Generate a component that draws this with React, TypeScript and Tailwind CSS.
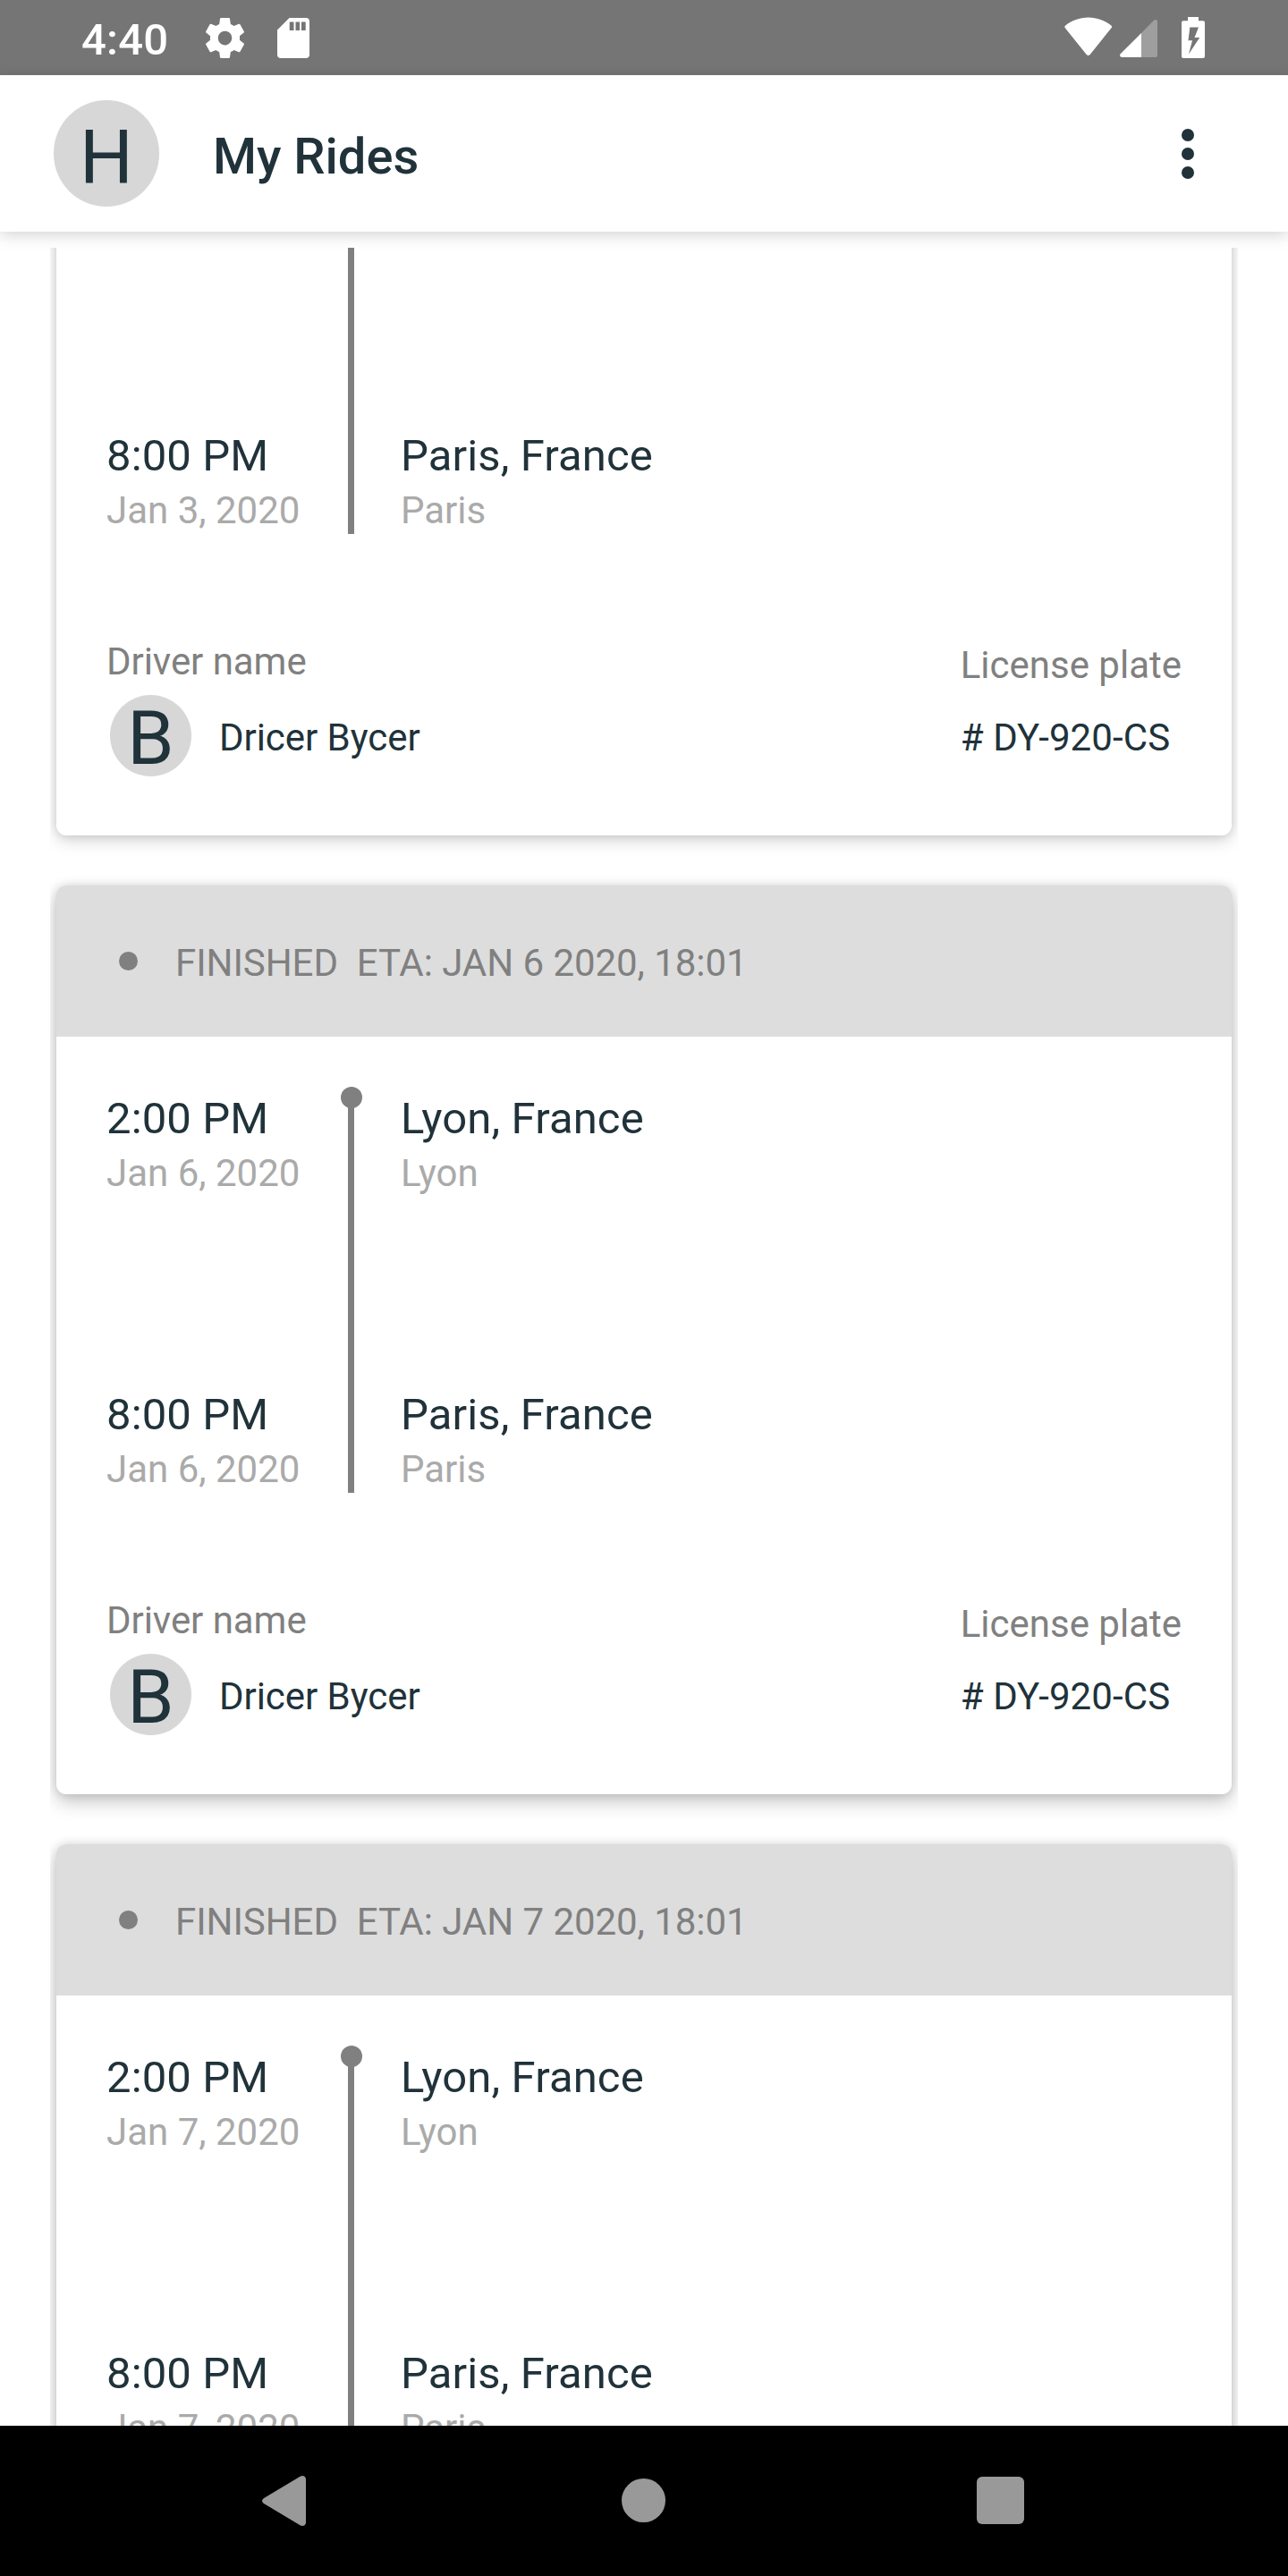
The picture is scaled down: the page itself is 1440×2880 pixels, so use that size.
type Ride = { day: string; eta: string; shadow: string };

const rides: Ride[] = [
  { day: 'Jan 3, 2020', eta: 'JAN 3 2020, 18:01', shadow: 'shadow-[0_7px_18px_rgba(0,0,0,0.14),0_0_11px_rgba(0,0,0,0.14)]' },
  { day: 'Jan 6, 2020', eta: 'JAN 6 2020, 18:01', shadow: 'shadow-[0_9px_20px_rgba(0,0,0,0.22),0_0_11px_rgba(0,0,0,0.13)]' },
  { day: 'Jan 7, 2020', eta: 'JAN 7 2020, 18:01', shadow: 'shadow-[0_9px_20px_rgba(0,0,0,0.22),0_0_11px_rgba(0,0,0,0.13)]' },
];

function StatusBar() {
  return (
    <div className="flex h-[84px] shrink-0 items-start bg-[#757575] text-white">
      <span className="ml-[91px] mt-[16px] w-[139px] text-[49px] font-medium leading-[57px] tracking-[0.2px]">4:40</span>
      <svg className="mt-[20px] h-[45px] w-[43px]" viewBox="2.27 2 19.46 20" preserveAspectRatio="none" fill="currentColor">
        <path d="M19.43 12.98c.04-.32.07-.64.07-.98s-.03-.66-.07-.98l2.11-1.65c.19-.15.24-.42.12-.64l-2-3.46c-.12-.22-.39-.3-.61-.22l-2.49 1c-.52-.4-1.08-.73-1.69-.98l-.38-2.65C14.46 2.18 14.25 2 14 2h-4c-.25 0-.46.18-.49.42l-.38 2.65c-.61.25-1.17.59-1.69.98l-2.49-1c-.23-.09-.49 0-.61.22l-2 3.46c-.13.22-.07.49.12.64l2.11 1.65c-.04.32-.07.65-.07.98s.03.66.07.98l-2.11 1.65c-.19.15-.24.42-.12.64l2 3.46c.12.22.39.3.61.22l2.49-1c.52.4 1.08.73 1.69.98l.38 2.65c.03.24.24.42.49.42h4c.25 0 .46-.18.49-.42l.38-2.65c.61-.25 1.17-.59 1.69-.98l2.49 1c.23.09.49 0 .61-.22l2-3.46c.12-.22.07-.49-.12-.64l-2.11-1.65zM12 15.5c-1.93 0-3.5-1.57-3.5-3.5s1.57-3.5 3.5-3.5 3.5 1.57 3.5 3.5-1.57 3.5-3.5 3.5z" />
      </svg>
      <svg className="ml-[37px] mt-[20px] h-[45px] w-[36px]" viewBox="0 0 36 45" fill="currentColor" fillRule="evenodd">
        <path d="M13.5 0H32Q36 0 36 4V41Q36 45 32 45H4Q0 45 0 41V13.5ZM13.700 4.500V14H18.500V4.500ZM20.500 4.500V14H25V4.500ZM27 4.500V14H31.700V4.500Z" />
      </svg>
      <svg className="ml-auto mt-[19px] h-[44px] w-[54px]" viewBox="0 0 54 44" fill="currentColor">
        <path d="M1.200 9.500C8 4 17 .5 26.700 .5S45.500 4 52.300 9.500Q53.800 10.700 52.500 12.300L28.700 42Q26.700 44 24.700 42L.8 12.300Q-.3 10.700 1.200 9.500Z" />
      </svg>
      <svg className="ml-[8px] mt-[22px] h-[42px] w-[42px]" viewBox="0 0 42 42" fill="currentColor">
        <path fillOpacity=".3" d="M24 15L37.800 1Q40 -1 42 1.500V40Q42 42 40 42H24Z" />
        <path d="M24 15V42H2Q-1 41 .7 38.300Z" />
      </svg>
      <svg className="ml-[27px] mr-[93px] mt-[19px] h-[46px] w-[26px]" viewBox="0 0 26 46" fill="currentColor" fillRule="evenodd">
        <path d="M7 0H19V4.300H24Q26 4.300 26 6.300V44Q26 46 24 46H2Q0 46 0 44V6.300Q0 4.300 2 4.300H7ZM9.300 11.500L7.500 26.200H12L8 41.500L20.200 23H14.500L19 11.500Z" />
      </svg>
    </div>
  );
}

function AppBar() {
  return (
    <header className="z-10 flex h-[175px] shrink-0 items-start bg-white shadow-[0_4px_16px_rgba(0,0,0,0.17)]">
      <div className="ml-[60px] mt-[28px] flex h-[119px] w-[118px] justify-center rounded-full bg-[#d7d7d7] text-[84px] leading-[98px]">
        <span className="mt-[15px]">H</span>
      </div>
      <h1 className="ml-[60px] mt-[58px] text-[56px] font-medium leading-[66px]">My Rides</h1>
      <div className="ml-auto mr-[105px] mt-[60px] flex flex-col gap-[7px]">
        <i className="size-[14px] rounded-full bg-[#20323a]" />
        <i className="size-[14px] rounded-full bg-[#20323a]" />
        <i className="size-[14px] rounded-full bg-[#20323a]" />
      </div>
    </header>
  );
}

function Stop({ main, sub }: { main: string; sub: string }) {
  return (
    <div className="flex h-[331px] flex-col gap-[8px] whitespace-nowrap">
      <span className="text-[49px] leading-[57px] tracking-[0.12px]">{main}</span>
      <span className="text-[42px] leading-[49px] text-[#aaaaaa]">{sub}</span>
    </div>
  );
}

function RideCard({ ride }: { ride: Ride }) {
  return (
    <article className={`h-[1016px] shrink-0 overflow-hidden rounded-[11px] bg-white ${ride.shadow}`}>
      <div className="flex h-[169px] items-start bg-[#dddddd] text-[42px] leading-[49px] text-[#808080]">
        <i className="ml-[70px] mt-[74px] size-[21px] rounded-full bg-[#808080]" />
        <span className="ml-[42px] mt-[62px] whitespace-pre tracking-[-0.05px]">{'FINISHED  ETA: ' + ride.eta}</span>
      </div>
      <div className="flex h-[572px] px-[56px] pt-[56px]">
        <div className="w-[261px] pt-[7px]">
          <Stop main="2:00 PM" sub={ride.day} />
          <Stop main="8:00 PM" sub={ride.day} />
        </div>
        <div className="flex w-[25px] flex-col items-center">
          <i className="size-[24px] rounded-full bg-[#808080]" />
          <i className="-mt-[1px] h-[431px] w-[7px] bg-[#808080]" />
        </div>
        <div className="ml-[43px] pt-[7px]">
          <Stop main="Lyon, France" sub="Lyon" />
          <Stop main="Paris, France" sub="Paris" />
        </div>
      </div>
      <div className="flex justify-between px-[56px] pt-[56px] text-[42px] leading-[49px]">
        <div>
          <div className="tracking-[-0.05px] text-[#808080]">Driver name</div>
          <div className="ml-[4px] mt-[13px] flex items-start">
            <div className="flex size-[91px] justify-center rounded-full bg-[#d7d7d7] text-[84px] leading-[98px]">
              <span>B</span>
            </div>
            <span className="ml-[31px] mt-[23px] tracking-[-0.05px]">Dricer Bycer</span>
          </div>
        </div>
        <div className="pt-[4px]">
          <div className="text-[#808080]">License plate</div>
          <div className="mt-[32px] tracking-[0.1px]"># DY-920-CS</div>
        </div>
      </div>
    </article>
  );
}

function NavBar() {
  return (
    <nav className="flex h-[168px] shrink-0 items-center bg-black pb-[1px] text-[#999999]">
      <svg className="ml-[293px] h-[56px] w-[49px]" viewBox="0 0 49 56" fill="currentColor">
        <path d="M42.500 .8C45.500 -1 49 .5 49 4V52C49 55.500 45.500 57 42.500 55.200L2 31Q-2 28 2 25Z" />
      </svg>
      <i className="ml-[353px] size-[49px] rounded-full bg-[#999999]" />
      <i className="ml-[347.500px] size-[53px] rounded-[6px] bg-[#999999]" />
    </nav>
  );
}

export default function App() {
  return (
    <div className="flex h-[2880px] w-[1440px] flex-col overflow-hidden bg-white font-[Roboto,sans-serif] text-[#20323a]">
      <StatusBar />
      <AppBar />
      <main className="mx-[56px] mt-[18px] flex min-h-0 flex-1 flex-col overflow-hidden px-[7px]">
        <div className="-mt-[359px] flex flex-col gap-[56px]">
          {rides.map((ride) => (
            <RideCard key={ride.day} ride={ride} />
          ))}
        </div>
      </main>
      <NavBar />
    </div>
  );
}
